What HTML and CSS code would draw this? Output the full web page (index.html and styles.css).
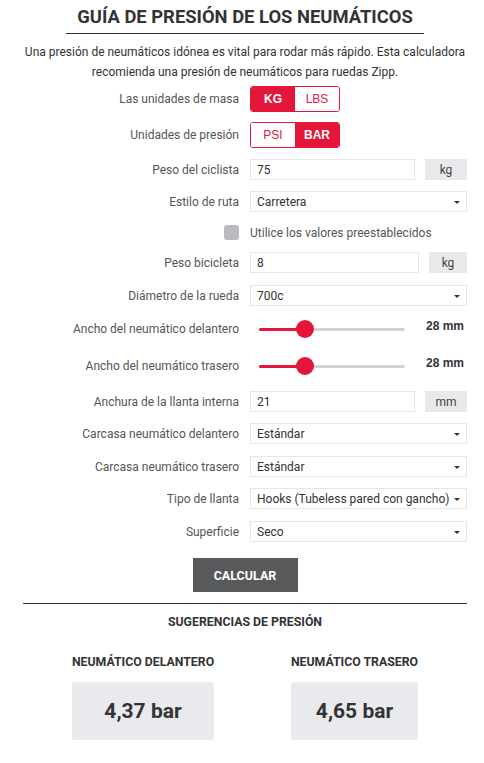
FILE: index.html
```html
<!DOCTYPE html>
<html lang="es">
<head>
<meta charset="utf-8">
<title>Guía de presión de los neumáticos</title>
<link rel="stylesheet" href="styles.css">
</head>
<body>
<main class="calc">
  <h1 class="title">GUÍA DE PRESIÓN DE LOS NEUMÁTICOS</h1>
  <p class="intro">Una presión de neumáticos idónea es vital para rodar más rápido. Esta calculadora recomienda una presión de neumáticos para ruedas Zipp.</p>

  <div class="form">
    <div class="row row-toggle">
      <span class="label">Las unidades de masa</span>
      <div class="toggle">
        <span class="seg seg-on">KG</span>
        <span class="seg">LBS</span>
      </div>
    </div>
    <div class="row row-toggle">
      <span class="label">Unidades de presión</span>
      <div class="toggle">
        <span class="seg">PSI</span>
        <span class="seg seg-on">BAR</span>
      </div>
    </div>
    <div class="row">
      <span class="label">Peso del ciclista</span>
      <div class="group">
        <span class="input">75</span>
        <span class="addon">kg</span>
      </div>
    </div>
    <div class="row">
      <span class="label">Estilo de ruta</span>
      <div class="select">Carretera<span class="caret"></span></div>
    </div>
    <div class="row row-check">
      <span class="label"><span class="checkbox"></span></span>
      <span class="check-text">Utilice los valores preestablecidos</span>
    </div>
    <div class="row">
      <span class="label">Peso bicicleta</span>
      <div class="group group-wide">
        <span class="input">8</span>
        <span class="addon">kg</span>
      </div>
    </div>
    <div class="row row-spaced">
      <span class="label">Diámetro de la rueda</span>
      <div class="select">700c<span class="caret"></span></div>
    </div>
    <div class="row row-slider row-slider-first">
      <span class="label">Ancho del neumático delantero</span>
      <div class="slider">
        <div class="track"><div class="fill"></div><div class="thumb"></div></div>
        <span class="value">28 mm</span>
      </div>
    </div>
    <div class="row row-slider">
      <span class="label">Ancho del neumático trasero</span>
      <div class="slider">
        <div class="track"><div class="fill"></div><div class="thumb"></div></div>
        <span class="value">28 mm</span>
      </div>
    </div>
    <div class="row row-spaced">
      <span class="label">Anchura de la llanta interna</span>
      <div class="group">
        <span class="input">21</span>
        <span class="addon">mm</span>
      </div>
    </div>
    <div class="row">
      <span class="label">Carcasa neumático delantero</span>
      <div class="select">Estándar<span class="caret"></span></div>
    </div>
    <div class="row row-spaced">
      <span class="label">Carcasa neumático trasero</span>
      <div class="select">Estándar<span class="caret"></span></div>
    </div>
    <div class="row">
      <span class="label">Tipo de llanta</span>
      <div class="select">Hooks (Tubeless pared con gancho)<span class="caret"></span></div>
    </div>
    <div class="row row-spaced">
      <span class="label">Superficie</span>
      <div class="select">Seco<span class="caret"></span></div>
    </div>
  </div>

  <div class="actions"><button class="btn">CALCULAR</button></div>

  <section class="results">
    <h2 class="results-title">SUGERENCIAS DE PRESIÓN</h2>
    <div class="cards">
      <div class="card card-front">
        <h3 class="card-title">NEUMÁTICO DELANTERO</h3>
        <div class="card-box">4,37 bar</div>
      </div>
      <div class="card card-rear">
        <h3 class="card-title">NEUMÁTICO TRASERO</h3>
        <div class="card-box">4,65 bar</div>
      </div>
    </div>
  </section>
</main>
</body>
</html>
```
FILE: styles.css
```css
* { box-sizing: border-box; }
body {
  margin: 0;
  background: #fff;
  font-family: Roboto, "Noto Sans", sans-serif;
  color: #333;
}
.calc {
  width: 444px;
  margin-left: 23px;
}
.title {
  margin: 6px 43px 0;
  padding-bottom: 6px;
  border-bottom: 1px solid #333;
  font-family: Roboto, sans-serif;
  font-weight: 700;
  font-size: 18.4px;
  line-height: 21px;
  text-align: center;
  color: #333;
}
.intro {
  margin: 8px 0 4px;
  font-size: 12px;
  line-height: 20px;
  text-align: center;
  color: #333;
}
.form {
  display: flex;
  flex-direction: column;
  gap: 11px;
}
.row {
  display: grid;
  grid-template-columns: 216px 217px;
  column-gap: 11px;
  align-items: center;
  height: 21px;
}
.row-spaced { margin-top: 1px; }
.row-toggle { height: 26px; }
.row-toggle + .row-toggle { margin-top: -1px; }
.row-check { height: 15px; margin-top: 2px; }
.row-check + .row { margin-top: 1px; }
.row-slider { height: 26px; }
.row-slider-first { margin-top: -1px; }
.label {
  text-align: right;
  font-size: 12px;
  color: #555;
  white-space: nowrap;
  display: flex;
  justify-content: flex-end;
}
.toggle {
  display: flex;
  width: 90px;
  height: 26px;
  border: 1px solid #e4173b;
  border-radius: 3px;
  overflow: hidden;
}
.seg {
  flex: 1;
  display: flex;
  align-items: center;
  justify-content: center;
  font-family: "Liberation Sans", Arial, sans-serif;
  font-size: 12px;
  color: #e4173b;
  background: #fff;
}
.seg-on {
  background: #e4173b;
  color: #fff;
  font-weight: 700;
}
.group {
  display: flex;
  justify-content: space-between;
  height: 21px;
}
.input, .select {
  display: flex;
  align-items: center;
  height: 21px;
  border: 1px solid #e6e6e6;
  padding-left: 6px;
  font-size: 12px;
  color: #333;
  background: #fff;
  white-space: nowrap;
}
.input { width: 165px; }
.group-wide .input { width: 169px; }
.addon {
  width: 42px;
  height: 21px;
  display: flex;
  align-items: center;
  justify-content: center;
  background: #e9e9ec;
  font-size: 12px;
  color: #444;
}
.group-wide .addon { width: 38px; }
.select {
  position: relative;
  width: 217px;
}
.caret {
  position: absolute;
  right: 6px;
  top: 9px;
  border-left: 3px solid transparent;
  border-right: 3px solid transparent;
  border-top: 3px solid #333;
}
.checkbox {
  display: block;
  width: 15px;
  height: 15px;
  border-radius: 3px;
  background: #b9bbbf;
}
.check-text {
  font-size: 12px;
  color: #555;
}
.slider {
  display: flex;
  align-items: center;
  justify-content: space-between;
  padding-left: 9px;
}
.track {
  position: relative;
  width: 146px;
  height: 3px;
  border-radius: 2px;
  background: #d2d2d7;
}
.fill {
  width: 46px;
  height: 3px;
  border-radius: 2px;
  background: #e4173b;
}
.thumb {
  position: absolute;
  left: 37px;
  top: -8px;
  width: 18px;
  height: 18px;
  border-radius: 50%;
  background: #e4173b;
}
.value {
  font-family: "Liberation Sans", Arial, sans-serif;
  font-weight: 700;
  font-size: 12px;
  color: #333;
  padding-right: 3px;
  margin-top: -6px;
}
.actions {
  display: flex;
  justify-content: center;
  margin-top: 16px;
}
.btn {
  width: 105px;
  height: 34px;
  border: 0;
  border-radius: 0;
  background: #58595b;
  color: #fff;
  font-family: Roboto, sans-serif;
  font-weight: 700;
  font-size: 12.5px;
}
.results {
  margin-top: 11px;
  border-top: 1px solid #333;
}
.results-title {
  margin: 11px 0 0;
  text-align: center;
  font-family: Roboto, sans-serif;
  font-weight: 700;
  font-size: 12.3px;
  line-height: 15px;
  color: #333;
}
.cards {
  display: flex;
  margin-top: 25px;
}
.card {
  display: flex;
  flex-direction: column;
  align-items: center;
}
.card-front { width: 142px; margin-left: 49px; }
.card-rear { width: 127px; margin-left: 77px; }
.card-title {
  margin: 0;
  font-family: Roboto, sans-serif;
  font-weight: 700;
  font-size: 12.3px;
  line-height: 15px;
  color: #333;
  white-space: nowrap;
}
.card-box {
  margin-top: 12px;
  width: 100%;
  height: 58px;
  display: flex;
  align-items: center;
  justify-content: center;
  background: #e9eaed;
  border-radius: 3px;
  font-family: Roboto, sans-serif;
  font-weight: 700;
  font-size: 21px;
  color: #333;
}
```
